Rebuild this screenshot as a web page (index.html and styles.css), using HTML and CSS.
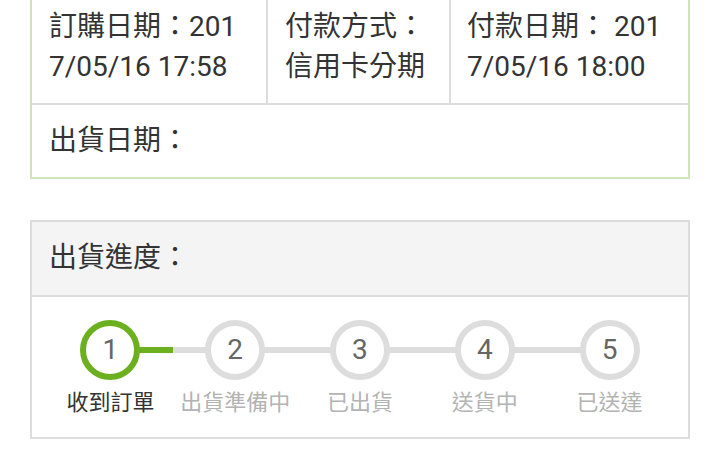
FILE: index.html
```html
<!DOCTYPE html>
<html lang="zh-Hant">
<head>
    <meta charset="UTF-8">
    <title>訂單明細</title>
    <link rel="stylesheet" href="styles.css">
</head>
<body>

<div class="page">
    <div class="order-info">
        <div class="cell">訂購日期：2017/05/16 17:58</div>
        <div class="cell">付款方式：信用卡分期</div>
        <div class="cell last">付款日期： 2017/05/16 18:00</div>
        <div class="cell wide">出貨日期：</div>
    </div>

    <div class="progress">
        <div class="progress-head">出貨進度：</div>
        <div class="steps">
            <div class="step done">
                <div class="dot">1</div>
                <div class="step-name">收到訂單</div>
            </div>
            <div class="step">
                <div class="dot">2</div>
                <div class="step-name">出貨準備中</div>
            </div>
            <div class="step">
                <div class="dot">3</div>
                <div class="step-name">已出貨</div>
            </div>
            <div class="step">
                <div class="dot">4</div>
                <div class="step-name">送貨中</div>
            </div>
            <div class="step">
                <div class="dot">5</div>
                <div class="step-name">已送達</div>
            </div>
        </div>
    </div>
</div>

</body>
</html>
```

FILE: styles.css
```css
body {
    margin: 0;
    background: #fff;
    color: #333;
    font-family: Roboto, "Noto Sans CJK TC", sans-serif;
}
.page {
    padding: 0 30px;
}
.order-info {
    display: grid;
    grid-template-columns: 236px 183px 1fr;
    margin-top: -11px;
    border: 2px solid #cfe4b8;
    font-size: 28px;
    line-height: 40px;
}
.cell {
    padding: 16px 17px;
    border-right: 2px solid #ddd;
    border-bottom: 2px solid #ddd;
    word-break: break-all;
}
.cell.last {
    border-right: none;
    padding-left: 16px;
}
.cell.wide {
    grid-column: 1 / 4;
    border: none;
}
.progress {
    margin-top: 41px;
    border: 2px solid #ddd;
}
.progress-head {
    background: #f4f4f4;
    padding: 16px 17px 17px;
    font-size: 28px;
    line-height: 40px;
    border-bottom: 2px solid #ddd;
}
.steps {
    display: flex;
    padding: 23px 16px 19px;
}
.step {
    flex: 1;
    position: relative;
    text-align: center;
}
.step::before, .step::after {
    content: "";
    position: absolute;
    top: 27px;
    width: 50%;
    height: 6px;
    background: #ddd;
}
.step::before { left: 0; }
.step::after { right: 0; }
.step:first-child::before, .step:last-child::after {
    display: none;
}
.step.done::after {
    background: #6cb01f;
}
.dot {
    position: relative;
    z-index: 1;
    box-sizing: border-box;
    width: 60px;
    height: 60px;
    margin: 0 auto;
    border: 6px solid #ddd;
    border-radius: 50%;
    background: #fff;
    color: #666;
    font-size: 28px;
    line-height: 48px;
}
.step.done .dot {
    border-color: #6cb01f;
}
.step-name {
    margin-top: 8px;
    font-size: 22px;
    line-height: 30px;
    color: #b3b3b3;
    white-space: nowrap;
}
.step.done .step-name {
    color: #333;
}
```
